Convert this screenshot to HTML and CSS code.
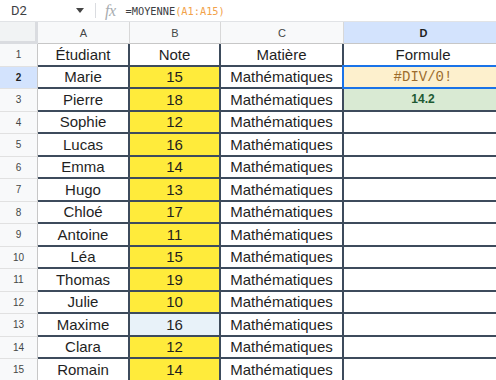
FILE: index.html
```html
<!DOCTYPE html>
<html lang="fr">
<head>
<meta charset="utf-8">
<title>Feuille</title>
<link rel="stylesheet" href="styles.css">
</head>
<body>
<div class="app">
  <div class="toolbar">
    <div class="namebox">D2</div>
    <svg class="caret" width="8" height="5" viewBox="0 0 8 5"><path d="M0 0h8L4 5z" fill="#444"/></svg>
    <div class="sep"></div>
    <span class="fx">fx</span>
    <span class="formula"><span class="fdark">=MOYENNE</span><span class="forange">(A1:A15)</span></span>
  </div>
  <div class="grid">
    <div class="corner"></div>
    <div class="colh">A</div>
    <div class="colh">B</div>
    <div class="colh">C</div>
    <div class="colh colsel">D</div>

    <div class="rowh">1</div>
    <div class="cell first">Étudiant</div>
    <div class="cell first">Note</div>
    <div class="cell first">Matière</div>
    <div class="cell first">Formule</div>

    <div class="rowh rowsel">2</div>
    <div class="cell">Marie</div>
    <div class="cell yel">15</div>
    <div class="cell">Mathématiques</div>
    <div class="cell err"><span class="errtxt">#DIV/0!</span><div class="selbox"></div></div>

    <div class="rowh">3</div>
    <div class="cell">Pierre</div>
    <div class="cell yel">18</div>
    <div class="cell">Mathématiques</div>
    <div class="cell ok">14.2</div>

    <div class="rowh">4</div>
    <div class="cell">Sophie</div>
    <div class="cell yel">12</div>
    <div class="cell">Mathématiques</div>
    <div class="cell"></div>

    <div class="rowh">5</div>
    <div class="cell">Lucas</div>
    <div class="cell yel">16</div>
    <div class="cell">Mathématiques</div>
    <div class="cell"></div>

    <div class="rowh">6</div>
    <div class="cell">Emma</div>
    <div class="cell yel">14</div>
    <div class="cell">Mathématiques</div>
    <div class="cell"></div>

    <div class="rowh">7</div>
    <div class="cell">Hugo</div>
    <div class="cell yel">13</div>
    <div class="cell">Mathématiques</div>
    <div class="cell"></div>

    <div class="rowh">8</div>
    <div class="cell">Chloé</div>
    <div class="cell yel">17</div>
    <div class="cell">Mathématiques</div>
    <div class="cell"></div>

    <div class="rowh">9</div>
    <div class="cell">Antoine</div>
    <div class="cell yel">11</div>
    <div class="cell">Mathématiques</div>
    <div class="cell"></div>

    <div class="rowh">10</div>
    <div class="cell">Léa</div>
    <div class="cell yel">15</div>
    <div class="cell">Mathématiques</div>
    <div class="cell"></div>

    <div class="rowh">11</div>
    <div class="cell">Thomas</div>
    <div class="cell yel">19</div>
    <div class="cell">Mathématiques</div>
    <div class="cell"></div>

    <div class="rowh">12</div>
    <div class="cell">Julie</div>
    <div class="cell yel">10</div>
    <div class="cell">Mathématiques</div>
    <div class="cell"></div>

    <div class="rowh">13</div>
    <div class="cell">Maxime</div>
    <div class="cell blu">16</div>
    <div class="cell">Mathématiques</div>
    <div class="cell"></div>

    <div class="rowh">14</div>
    <div class="cell">Clara</div>
    <div class="cell yel">12</div>
    <div class="cell">Mathématiques</div>
    <div class="cell"></div>

    <div class="rowh">15</div>
    <div class="cell">Romain</div>
    <div class="cell yel">14</div>
    <div class="cell">Mathématiques</div>
    <div class="cell"></div>
  </div>
</div>
</body>
</html>
```
FILE: styles.css
```css
html, body {
  margin: 0;
  padding: 0;
  background: #ffffff;
  overflow: hidden;
}
.app {
  width: 496px;
  height: 380px;
  overflow: hidden;
  font-family: "Liberation Sans", Arial, sans-serif;
}
.toolbar {
  height: 22px;
  box-sizing: border-box;
  border-bottom: 1px solid #e1e3e6;
  display: flex;
  align-items: center;
  background: #fff;
}
.namebox {
  font-family: Roboto, "Liberation Sans", sans-serif;
  font-size: 13px;
  color: #3c4043;
  margin-left: 11px;
  width: 64px;
}
.caret {
  margin-left: 1px;
}
.sep {
  width: 1px;
  height: 15px;
  background: #dadce0;
  margin-left: 11px;
}
.fx {
  font-family: "Liberation Serif", serif;
  font-style: italic;
  font-size: 16px;
  color: #a8acb0;
  margin-left: 9px;
  letter-spacing: -0.5px;
}
.formula {
  font-family: "DejaVu Sans Mono", monospace;
  font-size: 10.3px;
  margin-left: 10px;
}
.fdark { color: #3c4043; }
.forange { color: #f2a24a; }

.grid {
  display: grid;
  grid-template-columns: 38px 92px 91px 123px 160px;
  grid-template-rows: 22px repeat(15, 22.5px);
}
.corner {
  background: #f1f3f4;
  box-sizing: border-box;
  border-right: 3px solid #dadce0;
  border-bottom: 3px solid #dadce0;
}
.colh {
  background: #f8f9fa;
  box-sizing: border-box;
  border-bottom: 1px solid #c7c7c7;
  border-right: 1px solid #d8d8d8;
  font-size: 11px;
  color: #444746;
  display: flex;
  align-items: center;
  justify-content: center;
}
.colsel {
  background: #d3e3fd;
  font-weight: bold;
  color: #1f1f1f;
}
.rowh {
  background: #f8f9fa;
  box-sizing: border-box;
  border-right: 1px solid #c7c7c7;
  border-bottom: 1px solid #e1e1e1;
  font-size: 10px;
  color: #444746;
  display: flex;
  align-items: center;
  justify-content: center;
}
.rowsel {
  background: #d3e3fd;
  font-weight: bold;
  color: #1f1f1f;
}
.cell {
  position: relative;
  box-sizing: border-box;
  border-right: 2px solid #3d4b5c;
  border-bottom: 2px solid #3d4b5c;
  font-size: 15px;
  color: #1f1f1f;
  display: flex;
  align-items: center;
  justify-content: center;
  white-space: nowrap;
  background: #fff;
}
.yel { background: #ffeb3b; }
.blu { background: #e8f2f9; }
.err { background: #fdf0cd; }
.errtxt {
  font-family: "Liberation Mono", monospace;
  font-size: 14px;
  color: #9c6c2c;
}
.ok {
  background: #d9ead3;
  font-size: 12px;
  font-weight: bold;
  color: #1e5a32;
}
.selbox {
  position: absolute;
  top: -2px;
  left: -2px;
  right: -2px;
  bottom: -2px;
  border: 2px solid #1a73e8;
}
```
